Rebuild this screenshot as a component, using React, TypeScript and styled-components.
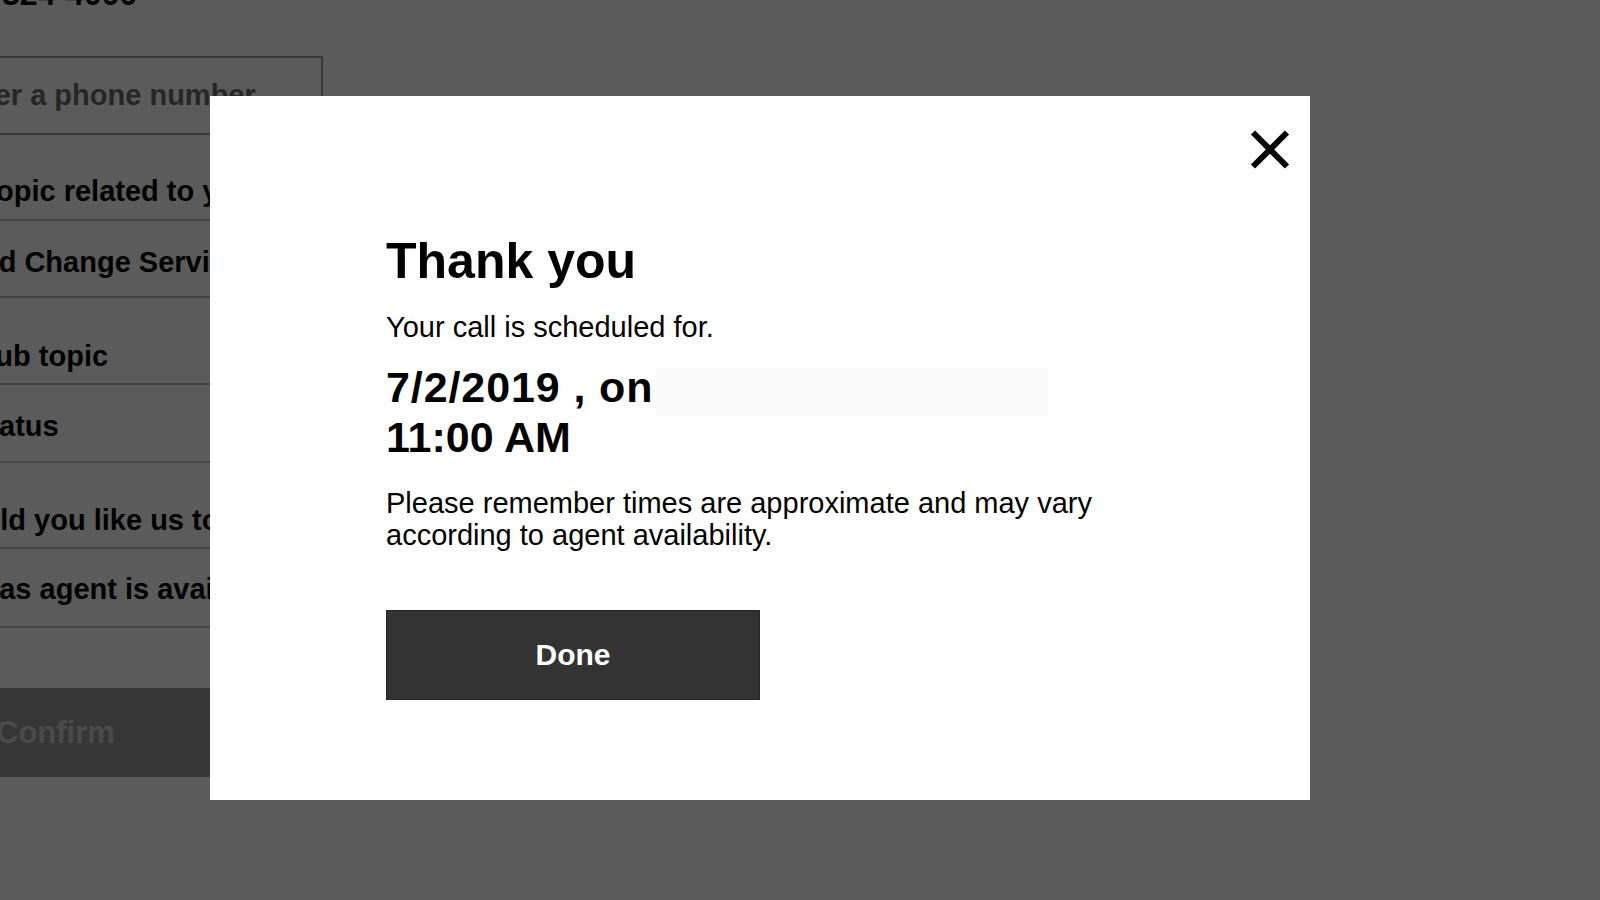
import React from "react";
import styled, { createGlobalStyle } from "styled-components";

const GlobalStyle = createGlobalStyle`
  html, body {
    margin: 0;
    padding: 0;
    background: #ffffff;
    overflow: hidden;
    font-family: "Liberation Sans", Arial, Helvetica, sans-serif;
    color: #000;
  }
  * { box-sizing: border-box; }
`;

/* ---------- page behind the dialog ---------- */

const Page = styled.div`
  width: 385px;
  margin: -26px 0 0 -62px;
  display: flex;
  flex-direction: column;
`;

const PhoneNumber = styled.div`
  font-size: 32px;
  line-height: 40px;
  font-weight: 700;
  white-space: nowrap;
`;

const PhoneInput = styled.input`
  margin-top: 42px;
  height: 79px;
  width: 100%;
  border: 2px solid #9c9c9c;
  background: #fff;
  padding: 0 8px;
  font-family: inherit;
  font-size: 29px;
  font-weight: 700;
  color: #000;
  outline: none;
  &::placeholder {
    color: #6a6a6a;
    opacity: 1;
  }
`;

const Row = styled.div<{ $h: number; $pb: number; $inset?: number }>`
  height: ${(p) => p.$h}px;
  display: flex;
  align-items: flex-end;
  padding: 0 0 ${(p) => p.$pb}px ${(p) => p.$inset ?? 0}px;
  border-bottom: 2px solid #bfbfbf;
  font-size: 29px;
  line-height: 30px;
  font-weight: 700;
  white-space: nowrap;
  overflow: hidden;
`;

const ConfirmButton = styled.button`
  margin-top: 60px;
  height: 89px;
  width: 100%;
  border: none;
  background: #979797;
  color: #d0d0d0;
  font-family: inherit;
  font-size: 31px;
  font-weight: 700;
  display: flex;
  align-items: center;
  padding: 0 0 0 58px;
`;

/* ---------- dialog ---------- */

const Backdrop = styled.div`
  position: fixed;
  inset: 0;
  background: rgba(0, 0, 0, 0.645);
  display: flex;
  align-items: flex-start;
  padding: 96px 0 0 210px;
`;

const Modal = styled.div`
  position: relative;
  width: 1100px;
  height: 704px;
  background: #ffffff;
  padding: 135px 0 0 176px;
  display: flex;
  flex-direction: column;
  align-items: flex-start;
`;

const CloseButton = styled.button`
  position: absolute;
  top: 34px;
  right: 20px;
  width: 40px;
  height: 39px;
  padding: 0;
  border: none;
  background: transparent;
  cursor: pointer;
  display: flex;
  svg { display: block; }
`;

const Title = styled.h1`
  margin: 0;
  font-size: 50px;
  line-height: 60px;
  font-weight: 700;
  color: #000;
`;

const Text = styled.p<{ $mt: number }>`
  margin: ${(p) => p.$mt}px 0 0;
  max-width: 720px;
  font-size: 29px;
  line-height: 32px;
  font-weight: 400;
  color: #000;
`;

const DateBlock = styled.div`
  margin-top: 19px;
  display: flex;
  flex-direction: column;
  font-size: 43px;
  line-height: 50px;
  font-weight: 700;
  color: #000;
`;

const DateLine = styled.div<{ $spacing?: number }>`
  display: flex;
  align-items: flex-start;
  white-space: pre;
  letter-spacing: ${(p) => p.$spacing ?? 0}px;
`;

const Placeholder = styled.span`
  display: inline-block;
  width: 392px;
  height: 48px;
  margin: 6px 0 -4px 4px;
  background: #fbfbfb;
`;

const DoneButton = styled.button`
  margin-top: 59px;
  width: 374px;
  height: 90px;
  background: #333333;
  border: 1px solid #262626;
  color: #ffffff;
  font-family: inherit;
  font-size: 30px;
  font-weight: 700;
  cursor: pointer;
  display: flex;
  align-items: center;
  justify-content: center;
`;

const CloseIcon = () => (
  <svg width="40" height="39" viewBox="0 0 40 39" aria-hidden="true">
    <path d="M3 2.5 L37 36.5 M37 2.5 L3 36.5" stroke="#000" strokeWidth="6" fill="none" />
  </svg>
);

export default function App() {
  return (
    <>
      <GlobalStyle />
      <Page>
        <PhoneNumber>800-324-4000</PhoneNumber>
        <PhoneInput placeholder="Enter a phone number" readOnly />
        <Row $h={86} $pb={13}>My topic related to your account</Row>
        <Row $h={77} $pb={19} $inset={22}>Add Change Service</Row>
        <Row $h={87} $pb={12} $inset={38}>Sub topic</Row>
        <Row $h={78} $pb={20} $inset={32}>Status</Row>
        <Row $h={86} $pb={12}>Would you like us to call you?</Row>
        <Row $h={79} $pb={22}>Call as agent is available</Row>
        <ConfirmButton>Confirm</ConfirmButton>
      </Page>
      <Backdrop>
        <Modal role="dialog" aria-modal="true">
          <CloseButton aria-label="Close">
            <CloseIcon />
          </CloseButton>
          <Title>Thank you</Title>
          <Text $mt={20}>Your call is scheduled for.</Text>
          <DateBlock>
            <DateLine $spacing={0.9}>
              7/2/2019 , on
              <Placeholder />
            </DateLine>
            <DateLine>11:00 AM</DateLine>
          </DateBlock>
          <Text $mt={25}>
            Please remember times are approximate and may vary according to agent availability.
          </Text>
          <DoneButton>Done</DoneButton>
        </Modal>
      </Backdrop>
    </>
  );
}
